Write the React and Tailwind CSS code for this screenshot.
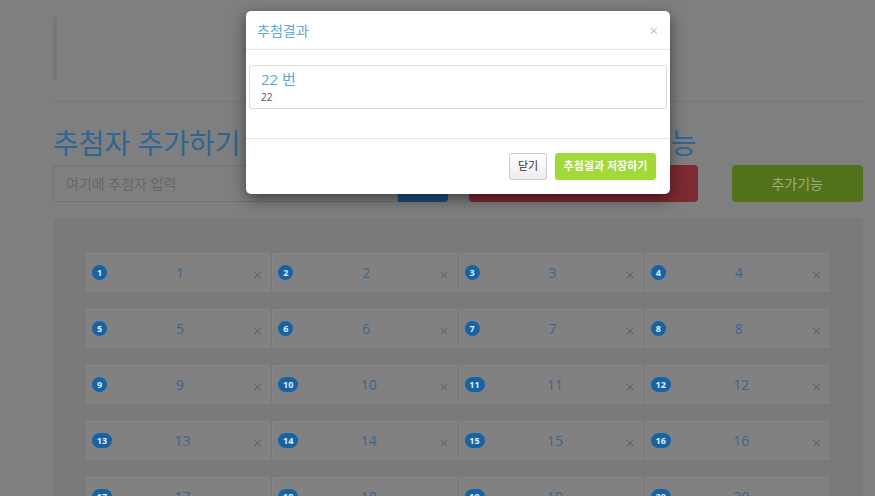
const font = "font-['Open_Sans','Noto_Sans_CJK_KR',sans-serif]"

const items = Array.from({ length: 24 }, (_, i) => i + 1)

const Cell = ({ n }) => (
  <div className="flex h-[39px] items-center border border-[#858585] bg-[#818181] pl-[5px] pr-[7px]">
    <span
      className={`flex h-[15px] shrink-0 items-center justify-center rounded-full bg-[#1463a7] text-[9px] font-bold leading-none text-[#e4ecf3] ${
        n < 10 ? 'w-[15px]' : 'w-[20px]'
      }`}
    >
      {n}
    </span>
    <span className="flex-1 text-center text-[14px] text-[#3a6690]">{n}</span>
    <span className="mt-[4px] text-[16px] leading-none text-[#666666]">×</span>
  </div>
)

export default function App() {
  return (
    <div className={`relative h-[496px] w-[875px] overflow-hidden bg-[#7f7f7f] ${font}`}>
      <div className="ml-[53px] w-[810px] pt-[17px]">
        <div className="h-[63px] border-l-4 border-[#767676]" />
        <div className="mt-[21px] border-t border-[#777777]" />

        <div className="mt-[26px] grid grid-cols-2 gap-x-[21px]">
          <div>
            <h2 className="whitespace-nowrap text-[28px] leading-[30px] text-[#2d6694]">
              추첨자 추가하기
            </h2>
            <div className="mt-[7px] flex h-[37px]">
              <div className="flex flex-1 items-center rounded-l-[4px] border border-[#737373] px-[12px] text-[14px] text-[#676767]">
                여기에 추첨자 입력
              </div>
              <button className="w-[50px] rounded-r-[4px] bg-[#1e5180] text-[14px] text-[#8a9fb3]">추가</button>
            </div>
          </div>
          <div>
            <h2 className="whitespace-nowrap text-[28px] leading-[30px] text-[#2d6694]">
              당첨자 추첨 및 기능
            </h2>
            <div className="mt-[7px] flex h-[37px] gap-[34px]">
              <button className="w-[229px] rounded-[4px] bg-[#7d2a33] text-[14px] text-[#b58a8e]">추첨하기</button>
              <button className="flex-1 rounded-[4px] bg-[#53721c] text-[14px] text-[#9cae7e]">추가기능</button>
            </div>
          </div>
        </div>

        <div className="mt-[16px] h-[400px] rounded-[4px] bg-[#7a7a7a] pl-[33px] pr-[34px] pt-[35px]">
          <div className="grid grid-cols-4 gap-x-[2px] gap-y-[17px]">
            {items.map((n) => (
              <Cell key={n} n={n} />
            ))}
          </div>
        </div>
      </div>

      <div className="absolute left-[246px] top-[11px] w-[424px] rounded-[5px] bg-white shadow-[0_5px_15px_rgba(0,0,0,0.5)]">
        <div className="flex h-[39px] items-center justify-between border-b border-[#e5e5e5] pl-[11px] pr-[12px]">
          <span className="text-[14px] text-[#5ea9df]">추첨결과</span>
          <span className="text-[15px] leading-none text-[#c4c4c4]">×</span>
        </div>
        <div className="border-b border-[#e5e5e5] px-[3px] pb-[29px] pt-[15px]">
          <div className="h-[44px] rounded-[3px] border border-[#dddddd] px-[11px] pt-[4px]">
            <div className="text-[15px] leading-[18px] text-[#5aa7de]">22 번</div>
            <div className="mt-[3px] text-[10px] leading-[12px] text-[#555555]">22</div>
          </div>
        </div>
        <div className="flex h-[55px] items-center justify-end gap-[8px] pr-[14px]">
          <button className="h-[27px] w-[38px] rounded-[3px] border border-[#cccccc] bg-gradient-to-b from-white to-[#ececec] text-[11px] text-[#333333]">
            닫기
          </button>
          <button className="h-[27px] w-[101px] rounded-[3px] bg-[#a1d936] text-[11px] font-semibold text-white">
            추첨결과 저장하기
          </button>
        </div>
      </div>
    </div>
  )
}
